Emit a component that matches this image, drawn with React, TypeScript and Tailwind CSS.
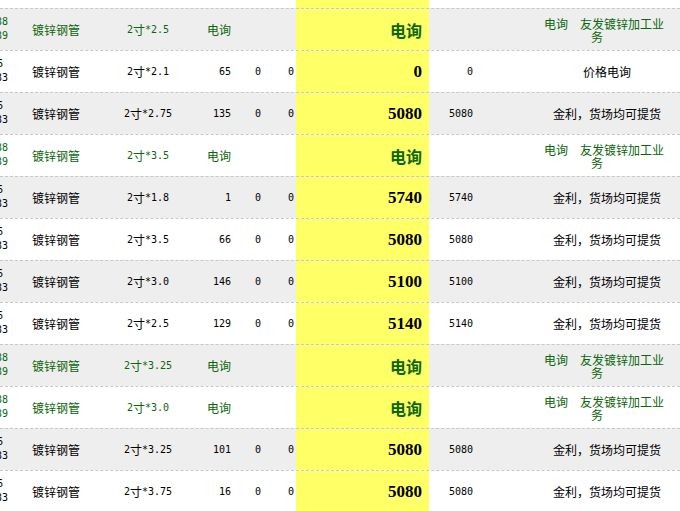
import React from "react";

type Row = {
  green?: boolean;
  spec: string;
  qty?: string;
  price?: string;
  note?: string;
};

const rows: Row[] = [
  { green: true, spec: "2寸*2.5" },
  { spec: "2寸*2.1", qty: "65", price: "0", note: "价格电询" },
  { spec: "2寸*2.75", qty: "135", price: "5080", note: "金利，货场均可提货" },
  { green: true, spec: "2寸*3.5" },
  { spec: "2寸*1.8", qty: "1", price: "5740", note: "金利，货场均可提货" },
  { spec: "2寸*3.5", qty: "66", price: "5080", note: "金利，货场均可提货" },
  { spec: "2寸*3.0", qty: "146", price: "5100", note: "金利，货场均可提货" },
  { spec: "2寸*2.5", qty: "129", price: "5140", note: "金利，货场均可提货" },
  { green: true, spec: "2寸*3.25" },
  { green: true, spec: "2寸*3.0" },
  { spec: "2寸*3.25", qty: "101", price: "5080", note: "金利，货场均可提货" },
  { spec: "2寸*3.75", qty: "16", price: "5080", note: "金利，货场均可提货" },
];

const cjk = "font-['Noto_Sans_CJK_SC',sans-serif] text-[12px]";

function Spec({ text }: { text: string }) {
  return (
    <>
      {text.split("").map((ch, i) =>
        /[\u4e00-\u9fff]/.test(ch) ? (
          <span key={i} className={cjk}>
            {ch}
          </span>
        ) : (
          <span key={i}>{ch}</span>
        )
      )}
    </>
  );
}

function TableRow({ row, index }: { row: Row; index: number }) {
  const color = row.green ? "text-[#0a660a]" : "text-black";
  const bg = index % 2 === 0 ? "bg-[#eeeeee]" : "bg-white";
  return (
    <div className={`flex h-[42px] border-t border-dashed border-[#c8c8c8] ${bg} ${color}`}>
      <div className="w-[16px] overflow-hidden flex flex-col justify-center leading-[14px] pb-[1px]">
        {row.green ? (
          <>
            <span className="ml-[-4px]">38</span>
            <span className="ml-[-4px]">39</span>
          </>
        ) : (
          <>
            <span className="ml-[-3px]">6</span>
            <span className="ml-[-4px]">33</span>
          </>
        )}
      </div>
      <div className={`w-[80px] pl-[16px] flex items-center ${cjk}`}>镀锌钢管</div>
      <div className="w-[104px] flex items-center justify-center">
        <Spec text={row.spec} />
      </div>
      <div className="w-[32px] flex items-center justify-end pr-[1px]">
        {row.green ? <span className={cjk}>电询</span> : row.qty}
      </div>
      <div className="w-[30px] flex items-center justify-end pr-[1px]">{row.green ? "" : "0"}</div>
      <div className="w-[34px] flex items-center justify-end pr-[2px]">{row.green ? "" : "0"}</div>
      <div className="w-[133px] bg-[#ffff66] flex items-center justify-end pr-[7px] font-bold">
        {row.green ? (
          <span className="font-['Noto_Sans_CJK_SC',sans-serif] text-[16px] text-[#0a660a]">电询</span>
        ) : (
          <span className="font-['Liberation_Serif',serif] text-[17px] text-black">{row.price}</span>
        )}
      </div>
      <div className="w-[45px] flex items-center justify-end pr-[1px]">{row.green ? "" : row.price}</div>
      <div className={`flex-1 flex flex-col items-center justify-center pl-[60px] ${cjk}`}>
        {row.green ? (
          <div className="flex flex-col items-center leading-[13px] pr-[6px]">
            <span>电询　友发镀锌加工业</span>
            <span className="pr-[14px]">务</span>
          </div>
        ) : (
          <span>{row.note}</span>
        )}
      </div>
    </div>
  );
}

export default function App() {
  return (
    <div className="w-[680px] h-[511px] overflow-hidden bg-white font-['DejaVu_Sans_Mono',monospace] text-[10px]">
      <div className="flex h-[8px]">
        <div className="w-[296px]" />
        <div className="w-[133px] bg-[#ffff66]" />
      </div>
      {rows.map((row, i) => (
        <TableRow key={i} row={row} index={i} />
      ))}
    </div>
  );
}
